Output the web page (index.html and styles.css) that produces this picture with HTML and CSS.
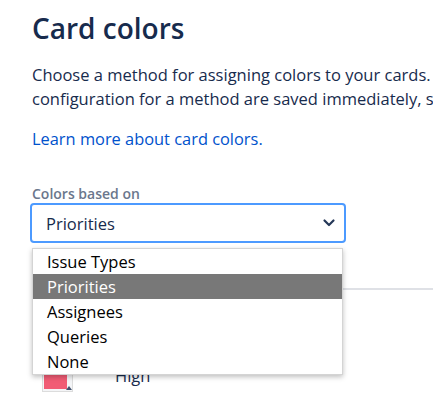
FILE: index.html
```html
<!DOCTYPE html>
<html>
<head>
<meta charset="utf-8">
<link rel="stylesheet" href="styles.css">
</head>
<body>
<div class="page">
  <h1 class="title">Card colors</h1>
  <p class="desc"><span class="line">Choose a method for assigning colors to your cards. Changes to the</span><span class="line">configuration for a method are saved immediately, so you can see them on the board.</span></p>
  <a class="link" href="#">Learn more about card colors.</a>
  <div class="field">
    <div class="label">Colors based on</div>
    <div class="select">
      <span class="value">Priorities</span>
      <svg class="chevron" width="14" height="10" viewBox="0 0 14 10"><path d="M2.5 2.5 L7 7 L11.5 2.5" fill="none" stroke="#253858" stroke-width="2.2" stroke-linecap="round" stroke-linejoin="round"/></svg>
    </div>
    <ul class="menu">
      <li>Issue Types</li>
      <li class="active">Priorities</li>
      <li>Assignees</li>
      <li>Queries</li>
      <li>None</li>
    </ul>
  </div>
  <div class="table">
    <div class="thead"></div>
    <div class="row">
      <div class="swatch"><span class="fill"></span><span class="tri"></span></div>
      <span class="name">High</span>
    </div>
  </div>
</div>
</body>
</html>
```
FILE: styles.css
```css
html, body { margin: 0; padding: 0; background: #fff; overflow: hidden; }
body { font-family: "Open Sans", "Noto Sans", sans-serif; color: #172B4D; }
.page { padding: 8px 0 0 32px; width: 700px; }
.title { margin: 0; font-size: 28px; font-weight: 600; line-height: 40px; color: #172B4D; }
.desc { margin: 15px 0 0; font-size: 16.5px; line-height: 24px; width: 401px; overflow: hidden; }
.desc .line { display: block; white-space: nowrap; }
.link { display: block; margin-top: 16px; font-size: 16.4px; line-height: 24px; color: #0052CC; text-decoration: none; width: max-content; }
.field { position: relative; margin-top: 35px; width: 316px; margin-left: -2px; }
.label { font-size: 14px; font-weight: 600; color: #6B778C; line-height: 16px; margin-left: 2px; }
.select { margin-top: 1px; height: 36px; border: 2px solid #4C9AFF; border-radius: 4px; display: flex; align-items: center; justify-content: space-between; padding: 0 8px 0 14px; font-size: 16.5px; color: #172B4D; }
.chevron { display: block; }
.menu { position: absolute; left: 2px; top: 62px; width: 309px; margin: 0; padding: 0; list-style: none; background: #fff; border: 1px solid #d4d4d4; box-shadow: 0 2px 5px rgba(0,0,0,0.25); z-index: 5; font-size: 16.5px; color: #000; }
.menu li { height: 25px; line-height: 25px; padding-left: 14px; }
.menu li.active { background: #787878; color: #fff; }
.thead { height: 45px; border-bottom: 2px solid #DFE1E6; }
.row { display: flex; align-items: flex-start; padding: 80px 0 10px; }
.swatch { position: relative; width: 31px; height: 22px; border: 1px solid #dcdcdc; margin-left: 10px; box-sizing: border-box; background: #f4f5f7; }
.fill { position: absolute; left: 1px; top: 1px; right: 5px; bottom: 2px; background: #F15C75; }
.tri { position: absolute; right: 0; bottom: 1px; width: 0; height: 0; border-left: 3px solid transparent; border-right: 3px solid transparent; border-bottom: 4px solid #42526E; }
.name { margin: -6px 0 0 42px; font-size: 16.5px; line-height: 24px; color: #172B4D; }
```
